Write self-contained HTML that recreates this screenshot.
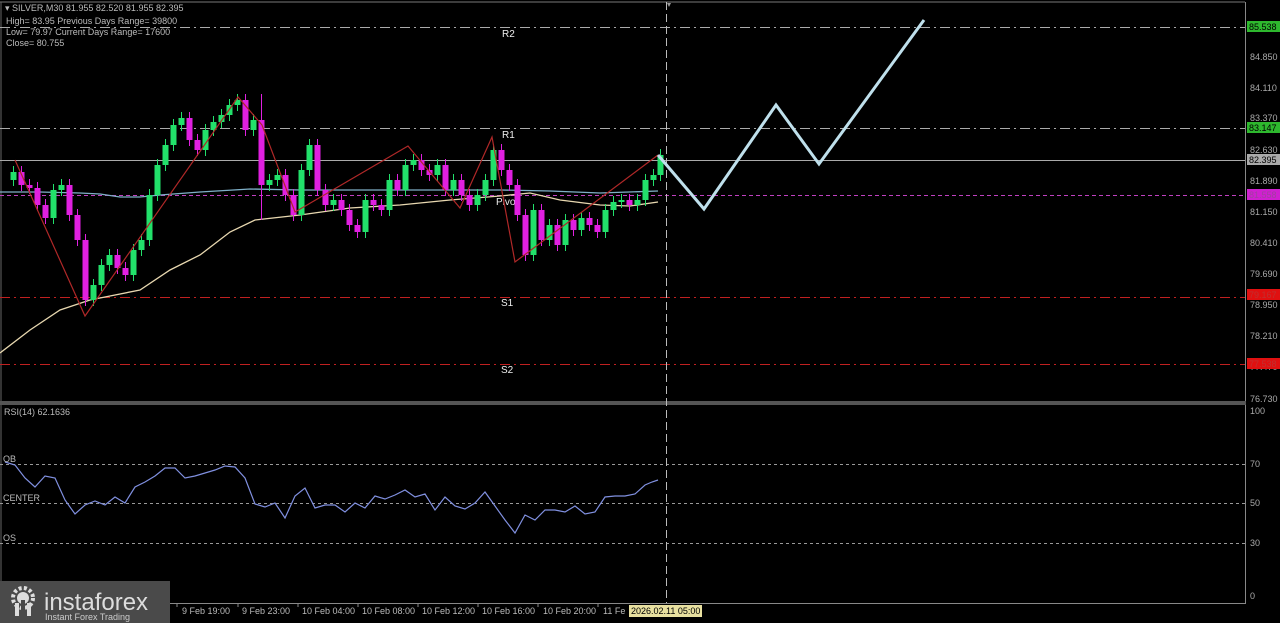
<!DOCTYPE html>
<html><head><meta charset="utf-8"><style>
html,body{margin:0;padding:0;background:#000;width:1280px;height:623px;overflow:hidden}
svg{display:block}
text{font-family:"Liberation Sans",sans-serif}
</style></head><body>
<svg width="1280" height="623" viewBox="0 0 1280 623" xmlns="http://www.w3.org/2000/svg">
<rect width="1280" height="623" fill="#000"/>
<line x1="0" y1="2" x2="1245" y2="2" stroke="#777" stroke-width="1"/>
<line x1="1245.5" y1="2" x2="1245.5" y2="603" stroke="#888" stroke-width="1"/>
<line x1="1" y1="2" x2="1" y2="603" stroke="#666" stroke-width="1"/>
<rect x="0" y="401" width="1246" height="4" fill="#555"/>
<line x1="0" y1="603.5" x2="1246" y2="603.5" stroke="#888"/>
<g stroke-width="1" fill="none">
<line x1="0" y1="27.5" x2="1245" y2="27.5" stroke="#aaa" stroke-dasharray="10,4,2,4"/>
<line x1="0" y1="128.5" x2="1245" y2="128.5" stroke="#aaa" stroke-dasharray="10,4,2,4"/>
<line x1="0" y1="160.5" x2="1245" y2="160.5" stroke="#aaa"/>
<line x1="0" y1="195.5" x2="1245" y2="195.5" stroke="#c040c0" stroke-dasharray="4,3"/>
<line x1="0" y1="297.5" x2="1245" y2="297.5" stroke="#c02020" stroke-dasharray="10,4,2,4"/>
<line x1="0" y1="364.5" x2="1245" y2="364.5" stroke="#c02020" stroke-dasharray="10,4,2,4"/>
<line x1="0" y1="464.5" x2="1245" y2="464.5" stroke="#999" stroke-dasharray="3,3"/>
<line x1="0" y1="503.5" x2="1245" y2="503.5" stroke="#999" stroke-dasharray="3,3"/>
<line x1="0" y1="543.5" x2="1245" y2="543.5" stroke="#999" stroke-dasharray="3,3"/>
<line x1="666.5" y1="2" x2="666.5" y2="603" stroke="#bbb" stroke-dasharray="8,4"/>
</g>
<polygon points="667,3 671,3 669,7" fill="#999"/>
<g fill="#eee" font-size="10">
<text x="502" y="37">R2</text><text x="502" y="138">R1</text>
<text x="496" y="205">Pivot</text><text x="501" y="306">S1</text><text x="501" y="373">S2</text>
</g>
<polyline fill="none" stroke="#7fb0c8" stroke-width="1.3" points="0,192 40,192 80,193 100,194 120,197 140,197 160,195 200,192 250,189 300,190 350,190 400,190 450,190 500,190 550,191 600,193 658,191"/>
<polyline fill="none" stroke="#e8d8b0" stroke-width="1.3" points="0,353 30,330 60,310 90,300 110,296 140,290 170,270 200,255 230,232 255,220 300,215 350,208 400,205 450,200 500,196 530,193 560,200 600,205 630,206 658,202"/>
<!-- wicks -->
<path fill="none" stroke="#22e06a" stroke-width="1" d="M13.5 166V186M53.5 184V224M61.5 179V196M93.5 279V306M101.5 259V291M109.5 249V271M133.5 244V281M141.5 234V256M149.5 189V246M157.5 159V201M165.5 139V171M173.5 119V151M181.5 112V131M205.5 124V156M213.5 116V136M221.5 109V128M229.5 99V121M237.5 94V111M253.5 114V136M269.5 174V191M277.5 169V186M301.5 164V221M309.5 139V176M333.5 194V211M365.5 194V238M389.5 174V216M405.5 159V196M413.5 154V171M437.5 159V181M453.5 174V196M477.5 189V211M485.5 174V201M493.5 144V186M533.5 204V261M549.5 219V246M565.5 214V251M581.5 212V236M605.5 204V238M613.5 196V216M621.5 194V208M637.5 194V211M645.5 174V206M653.5 169V186M660.5 149V181"/>
<path fill="none" stroke="#e020e0" stroke-width="1" d="M21.5 166V191M29.5 179V194M37.5 182V211M45.5 199V224M69.5 179V221M77.5 209V246M85.5 234V306M117.5 249V274M125.5 262V281M189.5 112V146M197.5 134V156M245.5 94V136M261.5 94V220M285.5 169V201M293.5 189V221M317.5 139V196M325.5 184V211M341.5 194V216M349.5 204V231M357.5 219V238M373.5 194V211M381.5 199V216M397.5 174V196M421.5 154V176M429.5 164V181M445.5 159V196M461.5 174V201M469.5 189V211M501.5 144V176M509.5 164V191M517.5 179V221M525.5 209V261M541.5 204V246M557.5 219V251M573.5 214V236M589.5 212V231M597.5 219V238M629.5 194V211"/>
<g fill="#22e06a">
<rect x="10.5" y="172" width="6" height="8"/><rect x="50.5" y="190" width="6" height="28"/><rect x="58.5" y="185" width="6" height="5"/>
<rect x="90.5" y="285" width="6" height="15"/><rect x="98.5" y="265" width="6" height="20"/><rect x="106.5" y="255" width="6" height="10"/>
<rect x="130.5" y="250" width="6" height="25"/><rect x="138.5" y="240" width="6" height="10"/><rect x="146.5" y="195" width="6" height="45"/>
<rect x="154.5" y="165" width="6" height="30"/><rect x="162.5" y="145" width="6" height="20"/><rect x="170.5" y="125" width="6" height="20"/>
<rect x="178.5" y="118" width="6" height="7"/><rect x="202.5" y="130" width="6" height="20"/><rect x="210.5" y="122" width="6" height="8"/>
<rect x="218.5" y="115" width="6" height="7"/><rect x="226.5" y="105" width="6" height="10"/><rect x="234.5" y="100" width="6" height="5"/>
<rect x="250.5" y="120" width="6" height="10"/><rect x="266.5" y="180" width="6" height="5"/><rect x="274.5" y="175" width="6" height="5"/>
<rect x="298.5" y="170" width="6" height="45"/><rect x="306.5" y="145" width="6" height="25"/><rect x="330.5" y="200" width="6" height="5"/>
<rect x="362.5" y="200" width="6" height="32"/><rect x="386.5" y="180" width="6" height="30"/><rect x="402.5" y="165" width="6" height="25"/>
<rect x="410.5" y="160" width="6" height="5"/><rect x="434.5" y="165" width="6" height="10"/><rect x="450.5" y="180" width="6" height="10"/>
<rect x="474.5" y="195" width="6" height="10"/><rect x="482.5" y="180" width="6" height="15"/><rect x="490.5" y="150" width="6" height="30"/>
<rect x="530.5" y="210" width="6" height="45"/><rect x="546.5" y="225" width="6" height="15"/><rect x="562.5" y="220" width="6" height="25"/>
<rect x="578.5" y="218" width="6" height="12"/><rect x="602.5" y="210" width="6" height="22"/><rect x="610.5" y="202" width="6" height="8"/>
<rect x="618.5" y="200" width="6" height="2"/><rect x="634.5" y="200" width="6" height="5"/><rect x="642.5" y="180" width="6" height="20"/>
<rect x="650.5" y="175" width="6" height="5"/><rect x="657.5" y="155" width="6" height="20"/>
</g>
<g fill="#e020e0">
<rect x="18.5" y="172" width="6" height="13"/><rect x="26.5" y="185" width="6" height="3"/><rect x="34.5" y="188" width="6" height="17"/>
<rect x="42.5" y="205" width="6" height="13"/><rect x="66.5" y="185" width="6" height="30"/><rect x="74.5" y="215" width="6" height="25"/>
<rect x="82.5" y="240" width="6" height="60"/><rect x="114.5" y="255" width="6" height="13"/><rect x="122.5" y="268" width="6" height="7"/>
<rect x="186.5" y="118" width="6" height="22"/><rect x="194.5" y="140" width="6" height="10"/><rect x="242.5" y="100" width="6" height="30"/>
<rect x="258.5" y="120" width="6" height="65"/><rect x="282.5" y="175" width="6" height="20"/><rect x="290.5" y="195" width="6" height="20"/>
<rect x="314.5" y="145" width="6" height="45"/><rect x="322.5" y="190" width="6" height="15"/><rect x="338.5" y="200" width="6" height="10"/>
<rect x="346.5" y="210" width="6" height="15"/><rect x="354.5" y="225" width="6" height="7"/><rect x="370.5" y="200" width="6" height="5"/>
<rect x="378.5" y="205" width="6" height="5"/><rect x="394.5" y="180" width="6" height="10"/><rect x="418.5" y="160" width="6" height="10"/>
<rect x="426.5" y="170" width="6" height="5"/><rect x="442.5" y="165" width="6" height="25"/><rect x="458.5" y="180" width="6" height="15"/>
<rect x="466.5" y="195" width="6" height="10"/><rect x="498.5" y="150" width="6" height="20"/><rect x="506.5" y="170" width="6" height="15"/>
<rect x="514.5" y="185" width="6" height="30"/><rect x="522.5" y="215" width="6" height="40"/><rect x="538.5" y="210" width="6" height="30"/>
<rect x="554.5" y="225" width="6" height="20"/><rect x="570.5" y="220" width="6" height="10"/><rect x="586.5" y="218" width="6" height="7"/>
<rect x="594.5" y="225" width="6" height="7"/><rect x="626.5" y="200" width="6" height="5"/>
</g>
<polyline fill="none" stroke="#b02828" stroke-width="1.2" points="15,160 85,316 238,97 262,125 295,212 408,146 460,208 492,137 515,262 658,155"/>
<polyline fill="none" stroke="#bfe0ec" stroke-width="3" points="658,155 704,209 776,105 819,164 924,20"/>
<polyline fill="none" stroke="#8090e0" stroke-width="1.2" points="5,462 15,465 25,478 35,487 45,476 55,478 65,500 75,514 85,505 95,501 105,505 115,497 125,503 135,487 145,482 155,476 165,468 175,468 185,478 195,476 205,473 215,470 225,466 235,467 245,478 255,504 265,507 275,503 285,518 295,496 305,488 315,508 325,505 335,505 345,512 355,503 365,508 375,496 385,499 395,495 405,490 415,497 425,494 435,510 445,497 455,506 465,509 475,503 485,492 495,506 505,520 515,533 525,515 535,520 545,510 555,510 565,512 575,506 585,514 595,512 605,497 615,496 625,496 635,494 645,485 652,482 658,480"/>
<g fill="#bbb" font-size="9">
<text x="5" y="11">▾ SILVER,M30  81.955 82.520 81.955 82.395</text>
<text x="6" y="24">High= 83.95     Previous Days Range= 39800</text>
<text x="6" y="35">Low= 79.97     Current Days Range= 17600</text>
<text x="6" y="46">Close= 80.755</text>
<text x="4" y="415">RSI(14) 62.1636</text>
<text x="3" y="462">OB</text><text x="3" y="501">CENTER</text><text x="3" y="541">OS</text>
</g>
<g font-size="9" fill="#aaa">
<text x="1250" y="60">84.850</text><text x="1250" y="91">84.110</text>
<text x="1250" y="121">83.370</text><text x="1250" y="153">82.630</text>
<text x="1250" y="184">81.890</text><text x="1250" y="215">81.150</text>
<text x="1250" y="246">80.410</text><text x="1250" y="277">79.690</text>
<text x="1250" y="308">78.950</text><text x="1250" y="339">78.210</text>
<text x="1250" y="370">77.470</text><text x="1250" y="402">76.730</text>
<text x="1250" y="414">100</text><text x="1250" y="467">70</text>
<text x="1250" y="506">50</text><text x="1250" y="546">30</text>
<text x="1250" y="599">0</text>
</g>
<g font-size="9">
<rect x="1247" y="21" width="33" height="11" fill="#2eb82e"/><text x="1249" y="30" fill="#000">85.538</text>
<rect x="1247" y="122" width="33" height="11" fill="#2eb82e"/><text x="1249" y="131" fill="#000">83.147</text>
<rect x="1247" y="154" width="33" height="11" fill="#aaa"/><text x="1249" y="163" fill="#000">82.395</text>
<rect x="1247" y="189" width="33" height="11" fill="#d020d0"/><text x="1249" y="198" fill="#a040a0">81.558</text>
<rect x="1247" y="289" width="33" height="11" fill="#e01010"/><text x="1249" y="298" fill="#c03030">79.167</text>
<rect x="1247" y="358" width="33" height="11" fill="#e01010"/><text x="1249" y="367" fill="#c03030">77.538</text>
</g>
<g font-size="9" fill="#bbb">
<text x="182" y="614">9 Feb 19:00</text><text x="242" y="614">9 Feb 23:00</text>
<text x="302" y="614">10 Feb 04:00</text><text x="362" y="614">10 Feb 08:00</text>
<text x="422" y="614">10 Feb 12:00</text><text x="482" y="614">10 Feb 16:00</text>
<text x="543" y="614">10 Feb 20:00</text><text x="603" y="614">11 Fe</text>
</g>
<g stroke="#888"><line x1="177" y1="603" x2="177" y2="607"/><line x1="238" y1="603" x2="238" y2="607"/><line x1="298" y1="603" x2="298" y2="607"/><line x1="358" y1="603" x2="358" y2="607"/><line x1="418" y1="603" x2="418" y2="607"/><line x1="478" y1="603" x2="478" y2="607"/><line x1="538" y1="603" x2="538" y2="607"/><line x1="598" y1="603" x2="598" y2="607"/></g>
<rect x="629" y="605" width="73" height="12" fill="#e8e0a0"/>
<text x="631" y="614" font-size="9" fill="#000">2026.02.11 05:00</text>
<rect x="0" y="581" width="170" height="42" fill="#4a4a4a"/>
<g fill="#ddd">
<circle cx="23" cy="598" r="10" fill="none" stroke="#ddd" stroke-width="4" stroke-dasharray="3,2.3"/>
<circle cx="23" cy="598" r="6" fill="#ddd"/>
<rect x="15" y="603" width="4" height="13"/><rect x="27" y="603" width="4" height="13"/><rect x="21" y="600" width="4" height="10" fill="#4a4a4a"/>
</g>
<text x="44" y="610" font-size="24" fill="#ddd">instaforex</text>
<text x="45" y="620" font-size="9" fill="#ccc">Instant Forex Trading</text>
</svg>
</body></html>
